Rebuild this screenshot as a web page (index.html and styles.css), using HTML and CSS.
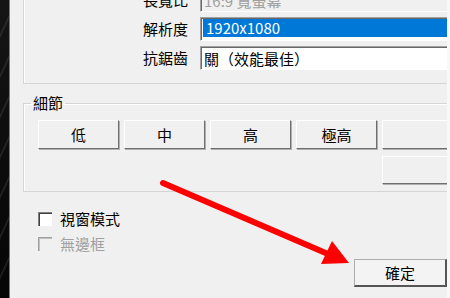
FILE: index.html
```html
<!DOCTYPE html>
<html lang="zh-Hant">
<head>
    <meta charset="UTF-8">
    <meta name="viewport" content="width=device-width, initial-scale=1.0">
    <title>顯示設定</title>
    <link rel="stylesheet" href="styles.css">
</head>
<body>
    <div class="screen">
        <div class="backdrop"></div>
        <div class="dialog">
            <div class="group display">
                <div class="field-row">
                    <span class="label">長寬比</span>
                    <div class="field disabled">16:9 寬螢幕</div>
                </div>
                <div class="field-row">
                    <span class="label">解析度</span>
                    <div class="field"><span class="selected">1920x1080</span></div>
                </div>
                <div class="field-row">
                    <span class="label">抗鋸齒</span>
                    <div class="field">關（效能最佳）</div>
                </div>
            </div>

            <fieldset class="group detail">
                <legend>細節</legend>
                <div class="presets">
                    <button>低</button>
                    <button>中</button>
                    <button>高</button>
                    <button>極高</button>
                    <button></button>
                    <button class="extra"></button>
                </div>
            </fieldset>

            <div class="options">
                <label class="check"><span class="box"></span>視窗模式</label>
                <label class="check off"><span class="box"></span>無邊框</label>
            </div>

            <div class="footer">
                <button class="ok">確定</button>
            </div>
        </div>
        <div class="edge"></div>

        <!-- annotation arrow -->
        <svg class="arrow" width="450" height="298" viewBox="0 0 450 298">
            <line x1="163" y1="183" x2="328" y2="254" stroke="#fe0000" stroke-width="6" stroke-linecap="round"/>
            <polygon points="349,263 321,264 332,241" fill="#fe0000"/>
        </svg>
    </div>
</body>
</html>
```

FILE: styles.css
```css
body {
    margin: 0;
    font-family: "Noto Sans CJK TC", "Liberation Sans", sans-serif;
    font-size: 15px;
    color: #000;
}
.screen {
    position: relative;
    display: flex;
    width: 450px;
    height: 298px;
    overflow: hidden;
    background: #f0f0f0;
}
.backdrop {
    flex: 0 0 9px;
    border-right: 1px solid #7a7a7a;
    background:
        repeating-linear-gradient(115deg, transparent 0 14px, rgba(120,120,120,.25) 15px, transparent 17px),
        linear-gradient(#151515, #050505);
}
.dialog {
    flex: 1;
    min-width: 0;
    padding-left: 13px;
}
.edge {
    flex: 0 0 3px;
    background: #f8f8f8;
}

/* top group, scrolled so only its lower part shows */
.group {
    border: 1px solid #d5d5d5;
    box-shadow: inset 1px 1px 0 #fff;
    margin-right: -20px;
}
.display {
    margin-top: -12px;
    border-top: none;
    padding-bottom: 13px;
    display: flex;
    flex-direction: column;
    gap: 5px;
}
.field-row {
    display: grid;
    grid-template-columns: 164px 1fr;
    column-gap: 12px;
    align-items: center;
    height: 24px;
}
.label {
    text-align: right;
    line-height: 24px;
}
.field {
    height: 24px;
    box-sizing: border-box;
    border-top: 1px solid #a0a0a0;
    border-left: 1px solid #a0a0a0;
    border-bottom: 1px solid #fff;
    box-shadow: inset 1px 1px 0 #696969;
    background: #fff;
    padding: 2px 3px;
    line-height: 19px;
    white-space: nowrap;
}
.field.disabled {
    background: #f0f0f0;
    color: #a0a0a0;
}
.field .selected {
    display: block;
    margin: -1px -3px 0 -1px;
    padding-left: 3px;
    background: #0078d7;
    color: #fff;
    line-height: 18px;
}

/* detail group */
.detail {
    margin: 11px -20px 0 0;
    padding: 0 0 7px 14px;
}
.detail legend {
    margin-left: -7px;
    padding: 0 2px;
    line-height: 16px;
}
.presets {
    display: grid;
    grid-template-columns: repeat(5, 81px);
    grid-template-rows: 29px 28px;
    column-gap: 5px;
    row-gap: 7px;
    margin-top: 9px;
}
button {
    font: inherit;
    color: #000;
    background: #f0f0f0;
    border: 1px solid #fff;
    border-right-color: #6e6e6e;
    border-bottom-color: #6e6e6e;
    box-shadow: 1px 1px 0 #b0b0b0;
    padding: 0;
}
.presets .extra {
    grid-column: 5;
}

/* checkboxes */
.options {
    margin-top: 18px;
    padding-left: 15px;
    display: flex;
    flex-direction: column;
    gap: 7px;
}
.check {
    display: flex;
    align-items: center;
    gap: 8px;
    line-height: 18px;
}
.box {
    width: 14px;
    height: 14px;
    box-sizing: border-box;
    background: #fff;
    border-top: 1px solid #808080;
    border-left: 1px solid #808080;
    box-shadow: inset 1px 1px 0 #404040;
}
.check.off {
    color: #a0a0a0;
}
.check.off .box {
    background: #f0f0f0;
    border-color: #a0a0a0;
    box-shadow: inset 1px 1px 0 #c0c0c0;
}

.footer {
    display: flex;
    justify-content: flex-end;
    margin-top: 6px;
}
.ok {
    width: 93px;
    height: 28px;
    border: 1px solid #adadad;
    border-right: 2px solid #555;
    border-bottom: 2px solid #555;
    box-shadow: none;
    background: #f3f3f3;
}

.arrow {
    position: absolute;
    left: 0;
    top: 0;
    pointer-events: none;
}
```
